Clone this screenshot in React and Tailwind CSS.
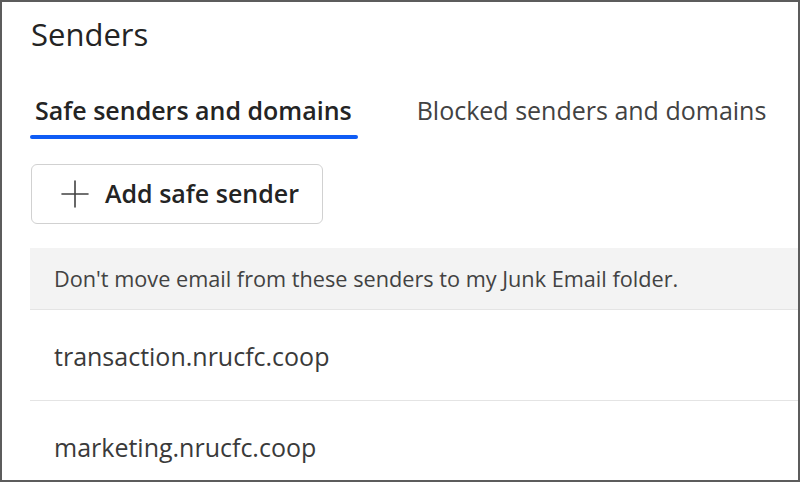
import React from 'react';

const senders = ['transaction.nrucfc.coop', 'marketing.nrucfc.coop'];

function PlusIcon() {
  return (
    <svg width="30" height="30" viewBox="0 0 30 30" fill="none">
      <path d="M15 2v26M2 15h26" stroke="#424242" strokeWidth="1.6" strokeLinecap="round" />
    </svg>
  );
}

export default function App() {
  return (
    <div
      className="w-[800px] h-[482px] bg-white border-2 border-[#5c5c5c] overflow-hidden text-[#242424]"
      style={{ fontFamily: '"Open Sans", "Noto Sans", sans-serif' }}
    >
      <div className="pl-[28px]">
        {/* Title */}
        <div className="h-[64px] flex items-center pl-[1px]">
          <h1 className="text-[31px] font-normal leading-none">Senders</h1>
        </div>

        {/* Tabs */}
        <div className="flex items-start gap-[59px] mt-[24px]">
          <div className="flex flex-col">
            <span className="pl-[5px] pr-[6px] text-[25px] font-semibold leading-[40px] whitespace-nowrap">Safe senders and domains</span>
            <span className="h-[4px] rounded-full bg-[#0f5cf5] mt-[5px]"></span>
          </div>
          <span className="text-[25px] leading-[40px] text-[#424242] whitespace-nowrap">Blocked senders and domains</span>
        </div>

        {/* Add button */}
        <button className="mt-[25px] ml-[1px] w-[292px] h-[60px] border border-[#d1d1d1] rounded-[6px] flex items-center gap-[15px] pl-[28px]">
          <PlusIcon />
          <span className="text-[25px] font-semibold whitespace-nowrap">Add safe sender</span>
        </button>

        {/* Table */}
        <div className="mt-[24px]">
          <div className="h-[62px] bg-[#f3f3f3] border-b border-[#e4e4e4] flex items-center pl-[24px] pt-[2px]">
            <span className="text-[21.7px] text-[#424242] whitespace-nowrap">Don't move email from these senders to my Junk Email folder.</span>
          </div>
          {senders.map((s) => (
            <div key={s} className="h-[91px] border-b border-[#e4e4e4] flex items-center pl-[24px] pt-[4px]">
              <span className="text-[25px] text-[#3a3a3a] whitespace-nowrap">{s}</span>
            </div>
          ))}
        </div>
      </div>
    </div>
  );
}
